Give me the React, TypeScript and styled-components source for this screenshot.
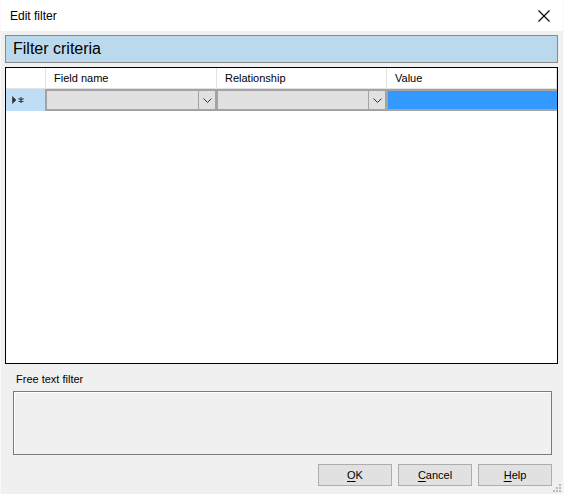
import styled, { createGlobalStyle } from "styled-components";

const GlobalStyle = createGlobalStyle`
  html, body {
    margin: 0;
    padding: 0;
    background: #f0f0f0;
  }
  body {
    font-family: "Liberation Sans", Arial, sans-serif;
    font-size: 11px;
    color: #000;
  }
`;

const Window = styled.div`
  width: 564px;
  height: 494px;
  display: flex;
  flex-direction: column;
  background: #f0f0f0;
  box-sizing: border-box;
  border-left: 1px solid #f8f8f8;
  border-right: 1px solid #f8f8f8;
  position: relative;
  overflow: hidden;
`;

const TitleBar = styled.div`
  height: 31px;
  flex: none;
  display: flex;
  align-items: center;
  justify-content: space-between;
  background: #fff;
  padding: 0 12px 0 9px;
  box-sizing: border-box;
`;

const Title = styled.span`
  font-size: 12px;
  color: #000;
`;

const CloseButton = styled.button`
  border: none;
  background: none;
  padding: 0;
  width: 14px;
  height: 14px;
  display: flex;
  align-items: center;
  justify-content: center;
`;

const Body = styled.div`
  flex: 1;
  display: flex;
  flex-direction: column;
  padding: 4px 5px 0 4px;
`;

const SectionHeader = styled.div`
  height: 28px;
  box-sizing: border-box;
  background: #bbd9ec;
  border: 1px solid #8a8a8a;
  display: flex;
  align-items: center;
  padding-left: 7px;
  font-size: 16px;
`;

const Grid = styled.div`
  margin-top: 4px;
  height: 297px;
  box-sizing: border-box;
  border: 1px solid #000;
  background: #fff;
  display: grid;
  grid-template-columns: 40px 171px 170px 1fr;
  grid-template-rows: 21px 22px;
  align-content: start;
`;

const HeaderCell = styled.div`
  border-right: 1px solid #e3e3e3;
  border-bottom: 1px solid #e3e3e3;
  display: flex;
  align-items: center;
  padding-left: 8px;
  font-size: 11px;
  &:last-child {
    border-right: none;
  }
`;

const RowHeader = styled.div`
  background: #bfddf4;
  border-right: 1px solid #a0a0a0;
  display: flex;
  align-items: center;
  padding-left: 6px;
`;

const ComboCell = styled.div`
  background: #e1e1e1;
  border: 2px solid #a3a3a3;
  border-left-width: 1px;
  display: flex;
  justify-content: flex-end;
`;

const ComboArrow = styled.div`
  width: 16px;
  border-left: 1px solid #a3a3a3;
  display: flex;
  align-items: center;
  justify-content: center;
`;

const ValueCell = styled.div<{ $selected?: boolean }>`
  background: ${(p) => (p.$selected ? "#3399ff" : "#fff")};
  border: 2px solid #a3a3a3;
  border-left-width: 1px;
  border-right: none;
`;

const FieldLabel = styled.div`
  margin: 9px 0 0 11px;
  height: 15px;
  font-size: 11px;
`;

const TextBox = styled.div`
  margin: 3px 6px 0 8px;
  height: 64px;
  box-sizing: border-box;
  border: 1px solid #7a7a7a;
  box-shadow: inset 1px 1px 0 #fff;
  background: #f0f0f0;
`;

const ButtonRow = styled.div`
  display: flex;
  justify-content: flex-end;
  gap: 6px;
  margin: 9px 6px 0 0;
`;

const Button = styled.button`
  width: 74px;
  height: 22px;
  box-sizing: border-box;
  background: #e1e1e1;
  border: 1px solid #adadad;
  font-family: "Liberation Sans", Arial, sans-serif;
  font-size: 11px;
  color: #000;
  padding: 0;
  u {
    text-decoration: underline;
    text-underline-offset: 2px;
  }
`;

const SizeGrip = styled.svg`
  position: absolute;
  right: 2px;
  bottom: 2px;
`;

function Chevron() {
  return (
    <svg width="9" height="5" viewBox="0 0 9 5">
      <path d="M0.5 0.5 L4.5 4.5 L8.5 0.5" stroke="#333" strokeWidth="1" fill="none" />
    </svg>
  );
}

// new-row marker: a small arrow followed by an asterisk
function NewRowMarker() {
  return (
    <svg width="13" height="8" viewBox="0 0 13 8">
      <path d="M0.5 0.5 L0.5 7.5 L4 4 Z" fill="#333" stroke="#333" strokeWidth="0.6" />
      <path d="M9 1 L9 7 M6.4 2.5 L11.6 5.5 M6.4 5.5 L11.6 2.5" stroke="#444" strokeWidth="1.3" />
    </svg>
  );
}

export default function App() {
  return (
    <>
      <GlobalStyle />
      <Window>
        <TitleBar>
          <Title>Edit filter</Title>
          <CloseButton aria-label="Close">
            <svg width="12" height="12" viewBox="0 0 12 12">
              <path d="M0.5 0.5 L11.5 11.5 M11.5 0.5 L0.5 11.5" stroke="#000" strokeWidth="1.1" />
            </svg>
          </CloseButton>
        </TitleBar>
        <Body>
          <SectionHeader>Filter criteria</SectionHeader>
          <Grid>
            <HeaderCell />
            <HeaderCell>Field name</HeaderCell>
            <HeaderCell>Relationship</HeaderCell>
            <HeaderCell>Value</HeaderCell>
            <RowHeader>
              <NewRowMarker />
            </RowHeader>
            <ComboCell>
              <ComboArrow>
                <Chevron />
              </ComboArrow>
            </ComboCell>
            <ComboCell>
              <ComboArrow>
                <Chevron />
              </ComboArrow>
            </ComboCell>
            <ValueCell $selected />
          </Grid>
          <FieldLabel>Free text filter</FieldLabel>
          <TextBox />
          <ButtonRow>
            <Button>
              <u>O</u>K
            </Button>
            <Button>
              <u>C</u>ancel
            </Button>
            <Button>
              <u>H</u>elp
            </Button>
          </ButtonRow>
        </Body>
        <SizeGrip width="10" height="10" viewBox="0 0 10 10">
          {[
            [8, 0],
            [8, 3],
            [5, 3],
            [8, 6],
            [5, 6],
            [2, 6],
          ].map(([x, y]) => (
            <rect key={`${x}-${y}`} x={x} y={y + 2} width="2" height="2" fill="#bcbcbc" />
          ))}
        </SizeGrip>
      </Window>
    </>
  );
}
